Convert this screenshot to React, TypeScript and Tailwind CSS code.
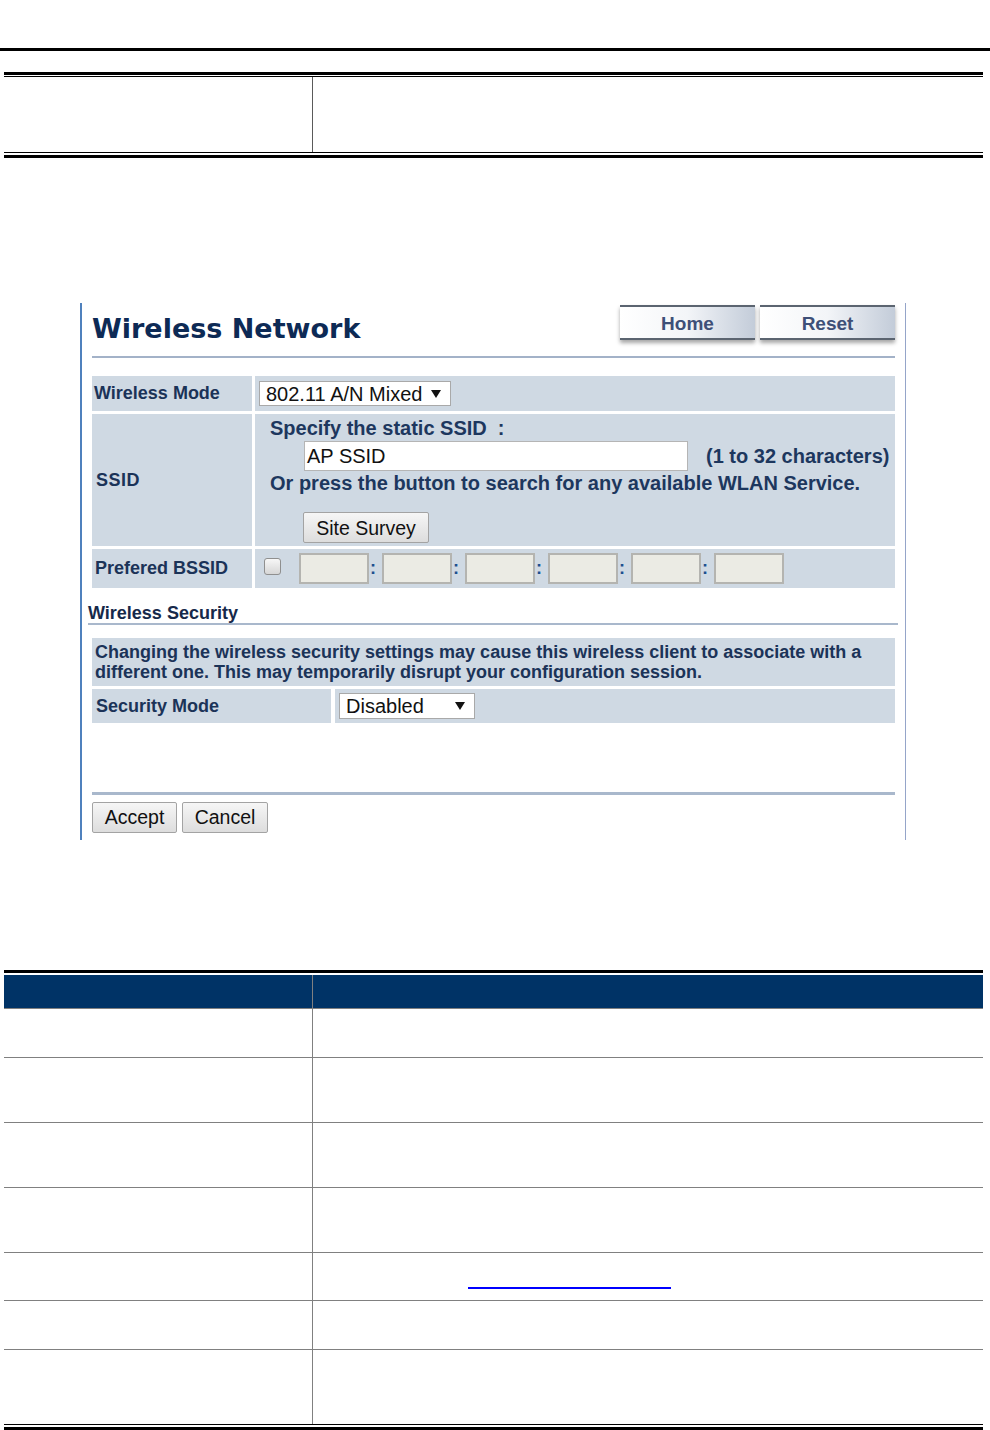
import React from "react"

const rowBg = "bg-[#cfd9e3]"
const labelText = "font-bold text-[18px] text-[#1b3358]"

const Arrow: React.FC = () => (
    <svg width="10" height="8" viewBox="0 0 10 8" className="shrink-0">
        <path d="M0 0 L10 0 L5 8 Z" fill="#111" />
    </svg>
)

const NavButton: React.FC<{ label: string }> = (props) => {
    return (
        <div className="flex flex-col w-[135px] h-[35px] shadow-[0_3px_4px_rgba(0,0,0,0.35)]">
            <div className="h-[5px] bg-[#5b6470]" />
            <div className="flex-1 flex items-center justify-center pt-[3px] bg-gradient-to-r from-white via-[#f3f5f8] to-[#c3ccd9] font-bold text-[19px] text-[#3e5078]">
                {props.label}
            </div>
            <div className="h-[4px] bg-[#5b6470]" />
        </div>
    )
}

const GrayButton: React.FC<{ label: string, width: string }> = (props) => {
    return (
        <div className={`${props.width} h-[31px] flex items-center justify-center border border-[#a3a3a3] rounded-[2px] bg-gradient-to-b from-[#f6f6f6] to-[#dddddd] text-[19.5px] text-[#111]`}>
            {props.label}
        </div>
    )
}

const MacBox: React.FC = () => (
    <div className="w-[70px] h-[31px] bg-[#ebebe4] border-2 border-[#b4b4b0]" />
)

const Colon: React.FC = () => (
    <div className="w-[13px] pl-[1px] font-bold text-[18px] text-[#1d4f8f]">:</div>
)

export default function App() {
    const descRows = [49, 65, 65, 65, 48, 49, 75]
    return (
        <div className="w-[990px] h-[1430px] bg-white overflow-hidden font-['Liberation_Sans',Arial,sans-serif]">
            <div className="h-[48px]" />
            <div className="h-[3px] bg-black" />

            {/* top table */}
            <div className="mt-[21px] ml-[4px] w-[979px]">
                <div className="h-[3px] bg-black" />
                <div className="mt-[1px] h-[1px] bg-black" />
                <div className="flex h-[75px]">
                    <div className="w-[309px] border-r border-[#5a5a5a]" />
                    <div className="flex-1" />
                </div>
                <div className="h-[1px] bg-black" />
                <div className="mt-[2px] h-[3px] bg-black" />
            </div>

            {/* screenshot of the web page */}
            <div className="mt-[145px] ml-[80px] w-[826px] h-[537px] border-l-2 border-l-[#4f81bd] border-r border-r-[#95a5c9] pl-[10px] pr-[10px]">
                <div className="flex justify-between h-[53px]">
                    <div className="mt-[10px] font-['DejaVu_Sans',Verdana,sans-serif] font-bold text-[27px] leading-[32px] text-[#0d2a55]">
                        Wireless Network
                    </div>
                    <div className="mt-[2px] flex gap-[5px]">
                        <NavButton label="Home" />
                        <NavButton label="Reset" />
                    </div>
                </div>
                <div className="h-[2px] bg-[#a3b2c8]" />

                {/* Wireless Mode */}
                <div className="mt-[18px] flex gap-[3px] h-[35px]">
                    <div className={`w-[160px] flex items-center pl-[2px] ${rowBg} ${labelText}`}>Wireless Mode</div>
                    <div className={`flex-1 flex items-center pl-[4px] ${rowBg}`}>
                        <div className="w-[192px] h-[25px] bg-white border border-[#a9a9a9] flex items-center pl-[6px] pr-[9px] justify-between text-[20px] text-[#111]">
                            <span>802.11 A/N Mixed</span>
                            <Arrow />
                        </div>
                    </div>
                </div>

                {/* SSID */}
                <div className="mt-[3px] flex gap-[3px] h-[132px]">
                    <div className={`w-[160px] flex items-center pl-[4px] tracking-[0.5px] ${rowBg} ${labelText}`}>SSID</div>
                    <div className={`flex-1 flex flex-col pl-[15px] pt-[2px] ${rowBg} text-[20px] leading-[24px] text-[#1d375e]`}>
                        <div className="font-bold">Specify the static SSID&nbsp; :</div>
                        <div className="flex items-center mt-[1px]">
                            <div className="ml-[34px] w-[384px] h-[30px] bg-white border border-[#b5b5b5] flex items-center pl-[2px] font-normal text-[#111]">AP SSID</div>
                            <div className="ml-[18px] font-bold">(1 to 32 characters)</div>
                        </div>
                        <div className="font-bold">Or press the button to search for any available WLAN Service.</div>
                        <div className="mt-[17px] ml-[33px]">
                            <GrayButton label="Site Survey" width="w-[126px]" />
                        </div>
                    </div>
                </div>

                {/* Prefered BSSID */}
                <div className="mt-[3px] flex gap-[3px] h-[39px]">
                    <div className={`w-[160px] flex items-center pl-[3px] ${rowBg} ${labelText}`}>Prefered BSSID</div>
                    <div className={`flex-1 flex items-center pl-[9px] ${rowBg}`}>
                        <div className="self-start mt-[9px] w-[17px] h-[17px] rounded-[3px] border border-[#8f8f8f] bg-gradient-to-b from-[#f7f7f7] to-[#d6d6d6]" />
                        <div className="ml-[18px] flex items-center">
                            <MacBox />
                            <Colon />
                            <MacBox />
                            <Colon />
                            <MacBox />
                            <Colon />
                            <MacBox />
                            <Colon />
                            <MacBox />
                            <Colon />
                            <MacBox />
                        </div>
                    </div>
                </div>

                {/* Wireless Security */}
                <div className="mt-[15px] -ml-[4px] w-[810px]">
                    <div className="font-bold text-[18px] leading-[20px] text-[#16294a]">Wireless Security</div>
                    <div className="h-[2px] bg-[#a9b8cc]" />
                </div>
                <div className={`mt-[13px] h-[48px] pl-[3px] pt-[4px] ${rowBg} font-bold text-[18px] leading-[20px] text-[#1b3358]`}>
                    Changing the wireless security settings may cause this wireless client to associate with a<br />
                    different one. This may temporarily disrupt your configuration session.
                </div>
                <div className="mt-[3px] flex gap-[4px] h-[34px]">
                    <div className={`w-[239px] flex items-center pl-[4px] ${rowBg} ${labelText}`}>Security Mode</div>
                    <div className={`flex-1 flex items-center pl-[4px] ${rowBg}`}>
                        <div className="w-[136px] h-[26px] bg-white border border-[#a9a9a9] flex items-center pl-[6px] pr-[9px] justify-between text-[20px] text-[#111]">
                            <span>Disabled</span>
                            <Arrow />
                        </div>
                    </div>
                </div>

                <div className="mt-[69px] h-[3px] bg-[#a9b8cc]" />
                <div className="mt-[7px] flex gap-[5px]">
                    <GrayButton label="Accept" width="w-[85px]" />
                    <GrayButton label="Cancel" width="w-[86px]" />
                </div>
            </div>

            {/* parameter table */}
            <div className="mt-[130px] ml-[4px] w-[979px]">
                <div className="h-[3px] bg-black" />
                <div className="mt-[2px] flex h-[33px] bg-[#003366]">
                    <div className="w-[309px] border-r border-[#808080]" />
                    <div className="flex-1" />
                </div>
                {descRows.map((h, i) => (
                    <div key={i} className="flex border-t border-[#808080]" style={{ height: h }}>
                        <div className="w-[309px] border-r border-[#808080]" />
                        <div className="flex-1">
                            {i === 4 && <div className="ml-[155px] mt-[34px] w-[203px] h-[2px] bg-[#0000ff]" />}
                        </div>
                    </div>
                ))}
                <div className="h-[1px] bg-black" />
                <div className="mt-[2px] h-[3px] bg-black" />
            </div>
        </div>
    )
}
